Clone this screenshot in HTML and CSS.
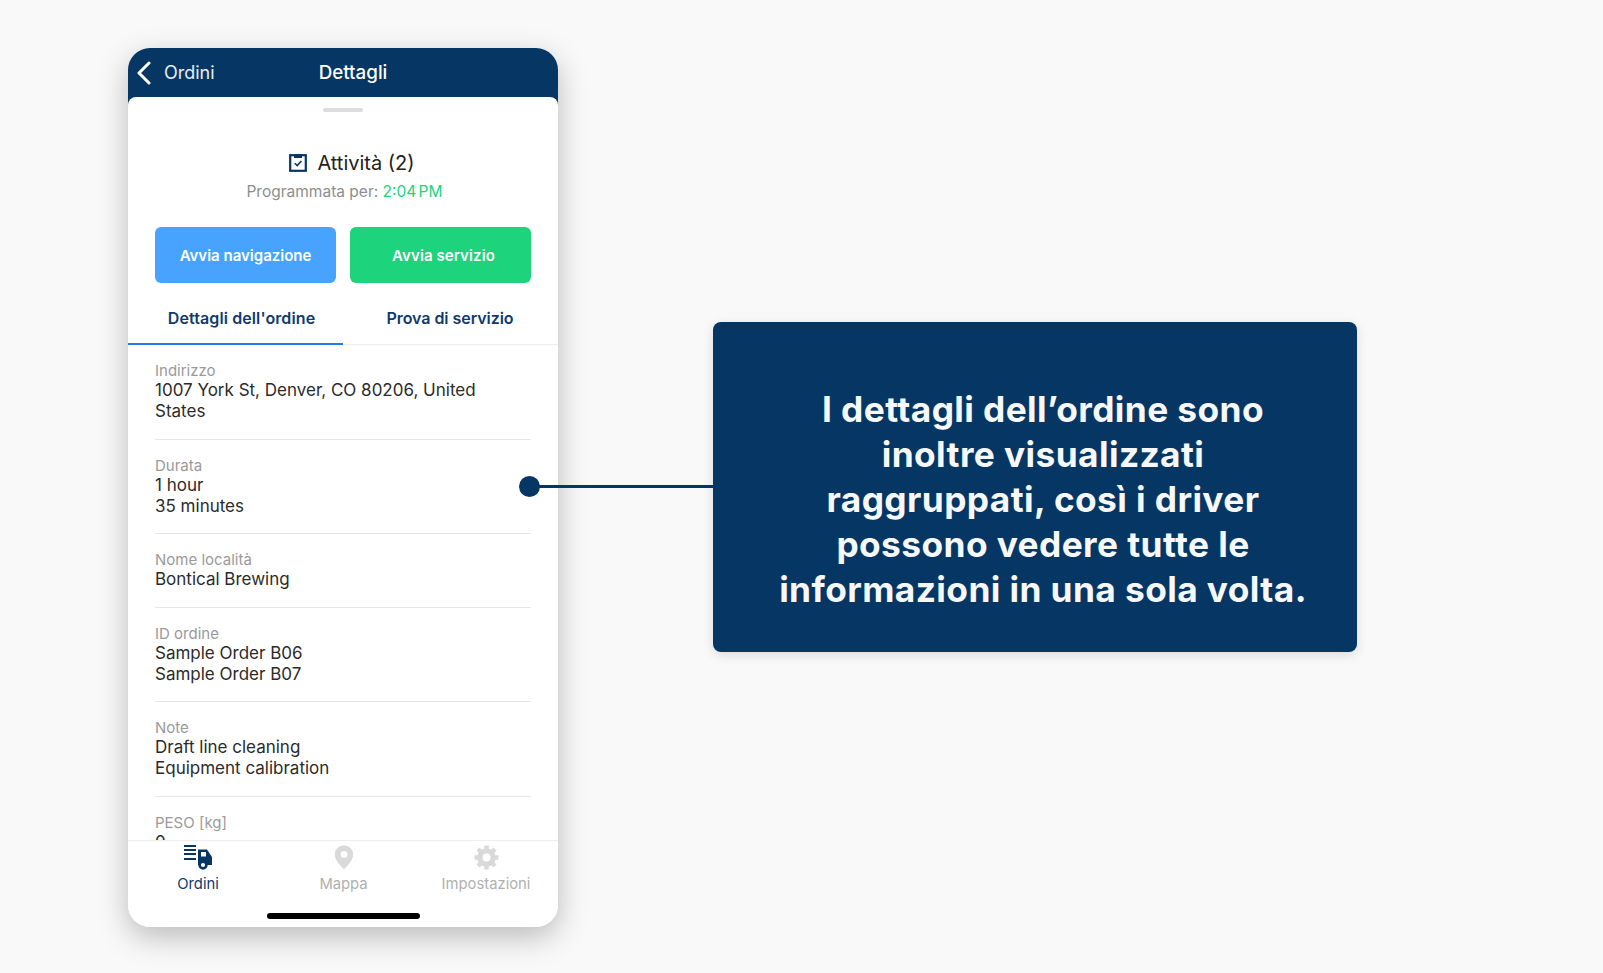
FILE: index.html
```html
<!DOCTYPE html>
<html lang="it">
<head>
  <meta charset="UTF-8">
  <meta name="viewport" content="width=device-width, initial-scale=1.0">
  <title>Dettagli dell'ordine</title>
  <link rel="stylesheet" href="styles.css">
</head>
<body>
  <div class="phone">
    <div class="topbar">
      <svg class="back" width="16" height="24" viewBox="0 0 16 24"><path d="M13 2 L3 12 L13 22" fill="none" stroke="#fff" stroke-width="3" stroke-linecap="round" stroke-linejoin="round"/></svg>
      <span class="back-label">Ordini</span>
      <span class="topbar-title">Dettagli</span>
    </div>

    <div class="sheet">
      <div class="handle"></div>

      <div class="summary">
        <div class="summary-title">
          <svg class="summary-icon" width="18" height="19" viewBox="0 0 18 19">
            <rect x="1.2" y="2.2" width="15.6" height="15.6" fill="none" stroke="#053664" stroke-width="2.2"/>
            <rect x="5" y="1" width="8" height="4" fill="#053664"/>
            <path d="M5.8 10.2 L8.2 12.6 L12.4 8" fill="none" stroke="#053664" stroke-width="1.6"/>
          </svg>
          <span>Attività (2)</span>
        </div>
        <div class="summary-sub">Programmata per: <span class="time">2:04 PM</span></div>
      </div>

      <div class="actions">
        <div class="btn btn-blue">Avvia navigazione</div>
        <div class="btn btn-green">Avvia servizio</div>
      </div>

      <div class="tabs">
        <div class="tab tab-active">Dettagli dell'ordine</div>
        <div class="tab tab-second">Prova di servizio</div>
      </div>

      <div class="rows">
        <div class="row">
          <div class="row-label">Indirizzo</div>
          <div class="row-value">1007 York St, Denver, CO 80206, United States</div>
        </div>
        <div class="row">
          <div class="row-label">Durata</div>
          <div class="row-value">1 hour<br>35 minutes</div>
        </div>
        <div class="row">
          <div class="row-label">Nome località</div>
          <div class="row-value">Bontical Brewing</div>
        </div>
        <div class="row">
          <div class="row-label">ID ordine</div>
          <div class="row-value">Sample Order B06<br>Sample Order B07</div>
        </div>
        <div class="row">
          <div class="row-label">Note</div>
          <div class="row-value">Draft line cleaning<br>Equipment calibration</div>
        </div>
        <div class="row">
          <div class="row-label">PESO [kg]</div>
          <div class="row-value">0</div>
        </div>
      </div>
    </div>

    <div class="tabbar">
      <div class="tabbar-items">
        <div class="nav-item nav-active">
          <svg width="28" height="25" viewBox="0 0 28 25">
            <path d="M0 1h12M0 5h12M0 9h12M0 14h12" stroke="#053664" stroke-width="2" fill="none"/>
            <path d="M14 4.5h9l5 7.5v8H14z" fill="#053664"/>
            <rect x="17" y="7" width="5" height="4.5" fill="#fff"/>
            <circle cx="19" cy="20" r="3.4" fill="#fff" stroke="#053664" stroke-width="2.6"/>
          </svg>
          <span>Ordini</span>
        </div>
        <div class="nav-item">
          <svg width="20" height="25" viewBox="0 0 20 25">
            <path d="M10 0.5C4.7 0.5 0.8 4.5 0.8 9.6 0.8 15.5 6.5 20.5 10 24.5 13.5 20.5 19.2 15.5 19.2 9.6 19.2 4.5 15.3 0.5 10 0.5z" fill="#d9d9d9"/>
            <circle cx="10" cy="9.4" r="3.4" fill="#fff"/>
          </svg>
          <span>Mappa</span>
        </div>
        <div class="nav-item">
          <svg width="25" height="25" viewBox="0 0 25 25">
            <circle cx="12.5" cy="12.5" r="6.8" fill="none" stroke="#d9d9d9" stroke-width="5"/>
            <path d="M12.5 0.5v24M0.5 12.5h24M4 4l17 17M21 4L4 21" stroke="#d9d9d9" stroke-width="4.4" fill="none"/>
            <circle cx="12.5" cy="12.5" r="4" fill="#fff"/>
          </svg>
          <span>Impostazioni</span>
        </div>
      </div>
      <div class="home-bar"></div>
    </div>
  </div>

  <div class="callout">
    <div class="pointer"></div>
    <p>I dettagli dell’ordine sono<br>inoltre visualizzati<br>raggruppati, così i driver<br>possono vedere tutte le<br>informazioni in una sola volta.</p>
  </div>
</body>
</html>
```

FILE: styles.css
```css
* {
  box-sizing: border-box;
}
html, body {
  margin: 0;
  height: 100%;
}
body {
  display: flex;
  align-items: center;
  height: 973px;
  padding: 2px 0 0 128px;
  overflow: hidden;
  background: #f9f9f9;
  font-family: Inter, "Liberation Sans", sans-serif;
}

/* phone */
.phone {
  display: flex;
  flex-direction: column;
  flex: none;
  width: 430px;
  height: 879px;
  border-radius: 22px;
  overflow: hidden;
  background: #fff;
  box-shadow: 0 10px 30px rgba(0, 0, 0, 0.25);
}
.topbar {
  display: flex;
  align-items: center;
  position: relative;
  flex: none;
  height: 57px;
  padding: 0 0 8px 8px;
  background: #053664;
  color: #fff;
}
.back-label {
  margin-left: 12px;
  font-size: 18px;
  font-weight: 400;
  color: #e8edf3;
}
.topbar-title {
  position: absolute;
  left: 0;
  right: 0;
  padding-left: 20px;
  text-align: center;
  font-size: 18.8px;
  font-weight: 500;
}
.sheet {
  position: relative;
  flex: 1;
  min-height: 0;
  overflow: hidden;
  margin-top: -8px;
  border-radius: 8px 8px 0 0;
  background: #fff;
}
.handle {
  width: 40px;
  height: 4px;
  margin: 11px auto 0;
  border-radius: 2px;
  background: #dcdcdc;
}
.summary {
  margin-top: 38px;
  text-align: center;
}
.summary-title {
  display: flex;
  align-items: center;
  justify-content: center;
  gap: 10px;
  height: 26px;
  padding-left: 18px;
  font-size: 20px;
  color: #222;
}
.summary-icon {
  margin-bottom: 2px;
}
.summary-sub {
  margin-top: 6px;
  padding-left: 3px;
  font-size: 15.5px;
  line-height: 20px;
  color: #8e8e8e;
}
.time {
  color: #1dd37b;
  word-spacing: -2px;
}
.actions {
  display: grid;
  grid-template-columns: 181px 1fr;
  gap: 14px;
  margin: 25px 27px 0;
}
.btn {
  display: flex;
  align-items: center;
  justify-content: center;
  height: 56px;
  border-radius: 6px;
  color: #fff;
  font-size: 15px;
  font-weight: 600;
}
.btn-blue {
  background: #47a3ff;
}
.btn-green {
  padding-left: 6px;
  letter-spacing: 0.1px;
  background: #1dd37b;
}
.tabs {
  display: grid;
  grid-template-columns: 1fr 1fr;
  height: 62px;
  border-bottom: 1px solid #eeeeee;
}
.tab {
  display: flex;
  align-items: center;
  justify-content: center;
  margin-bottom: -1px;
  padding-top: 8px;
  font-size: 16px;
  font-weight: 600;
  color: #0f3a6e;
}
.tab-active {
  padding-left: 12px;
  letter-spacing: 0.1px;
  box-shadow: inset 0 -2px 0 #1f7cf0;
}
.tab-second {
  padding-right: 1px;
  letter-spacing: -0.05px;
}
.rows {
  margin: 0 27px;
}
.row {
  padding: 17px 0 16.5px;
  border-bottom: 1px solid #e6e6e6;
}
.row-label {
  font-size: 15px;
  line-height: 18px;
  color: #9a9a9a;
}
.row-value {
  padding-right: 30px;
  font-size: 17px;
  line-height: 21px;
  color: #2b2b2b;
}

/* bottom nav */
.tabbar {
  flex: none;
  height: 87px;
  border-top: 1px solid #eeeeee;
  background: #fff;
}
.tabbar-items {
  display: grid;
  grid-template-columns: 140px 151px 134px;
  height: 68px;
  padding-top: 4px;
}
.nav-item {
  display: flex;
  flex-direction: column;
  align-items: center;
  gap: 4px;
  font-size: 14.8px;
  line-height: 20px;
  color: #b0b0b0;
}
.nav-item svg {
  display: block;
}
.nav-active {
  color: #0f3a6e;
}
.home-bar {
  width: 153px;
  height: 6px;
  margin: 4px auto 0;
  border-radius: 3px;
  background: #000;
}

/* callout */
.callout {
  display: flex;
  align-items: center;
  justify-content: center;
  position: relative;
  flex: none;
  width: 644px;
  height: 330px;
  margin: -2px 0 0 155px;
  padding: 26px 0 0 16px;
  border-radius: 8px;
  background: #053664;
  box-shadow: 0 3px 12px rgba(0, 0, 0, 0.12);
}
.callout p {
  margin: 0;
  text-align: center;
  white-space: nowrap;
  color: #f6f8fa;
  font-size: 35.3px;
  font-weight: 700;
  letter-spacing: 0.4px;
  line-height: 45px;
}
.pointer {
  position: absolute;
  top: 50%;
  right: 100%;
  width: 184px;
  height: 3px;
  margin-top: -2px;
  background: #053664;
}
.pointer::before {
  content: "";
  position: absolute;
  left: -10px;
  top: -9px;
  width: 21px;
  height: 21px;
  border-radius: 50%;
  background: #053664;
}
```
